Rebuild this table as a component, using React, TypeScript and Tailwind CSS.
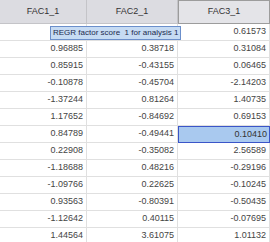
import React from "react";

const rows: [string, string, string][] = [
  ["0.33190", "0.12857", "0.61573"],
  ["0.96885", "0.38718", "0.31084"],
  ["0.85915", "-0.43155", "0.06465"],
  ["-0.10878", "-0.45704", "-2.14203"],
  ["-1.37244", "0.81264", "1.40735"],
  ["1.17652", "-0.84692", "0.69153"],
  ["0.84789", "-0.49441", "0.10410"],
  ["0.22908", "-0.35082", "2.56589"],
  ["-1.18688", "0.48216", "-0.29196"],
  ["-1.09766", "0.22625", "-0.10245"],
  ["0.93563", "-0.80391", "-0.50435"],
  ["-1.12642", "0.40115", "-0.07695"],
  ["1.44564", "3.61075", "1.01132"],
];

const App = () => {
  return (
    <div className="relative w-[270px] h-[242px] overflow-hidden bg-white font-['Liberation_Sans',Arial,sans-serif] text-[9px]">
      <div className="grid grid-cols-[87px_91px_92px]">
        <div className="h-[24px] flex items-center justify-center bg-[#dcdce1] border-r border-b border-[#c4c4c8] text-[#333]">FAC1_1</div>
        <div className="h-[24px] flex items-center justify-center bg-[#dcdce1] border-r border-b border-[#c4c4c8] text-[#333]">FAC2_1</div>
        <div className="h-[24px] flex items-center justify-center bg-[#e4e4e8] border border-[#9c9c9c] text-[#333]">FAC3_1</div>
        {rows.map((r, i) =>
          r.map((v, j) => {
            const selected = i === 6 && j === 2;
            return (
              <div
                key={i + "-" + j}
                className={
                  selected
                    ? "h-[17px] flex items-center justify-end pr-[2px] bg-[#a9c9ef] border border-[#3a55c8] text-[#333]"
                    : "h-[17px] flex items-center justify-end pr-[3px] border-r border-b border-[#e0e0e0] text-[#444]"
                }
              >
                {v}
              </div>
            );
          })
        )}
      </div>
      <div className="absolute left-[50px] top-[26px] h-[14px] px-[2px] flex items-center bg-[#c6dbf3] border border-[#6b8fcb] text-[#1c2a4e] text-[8px] whitespace-pre leading-none">
        REGR factor score  1 for analysis 1
      </div>
    </div>
  );
};

export default App;
